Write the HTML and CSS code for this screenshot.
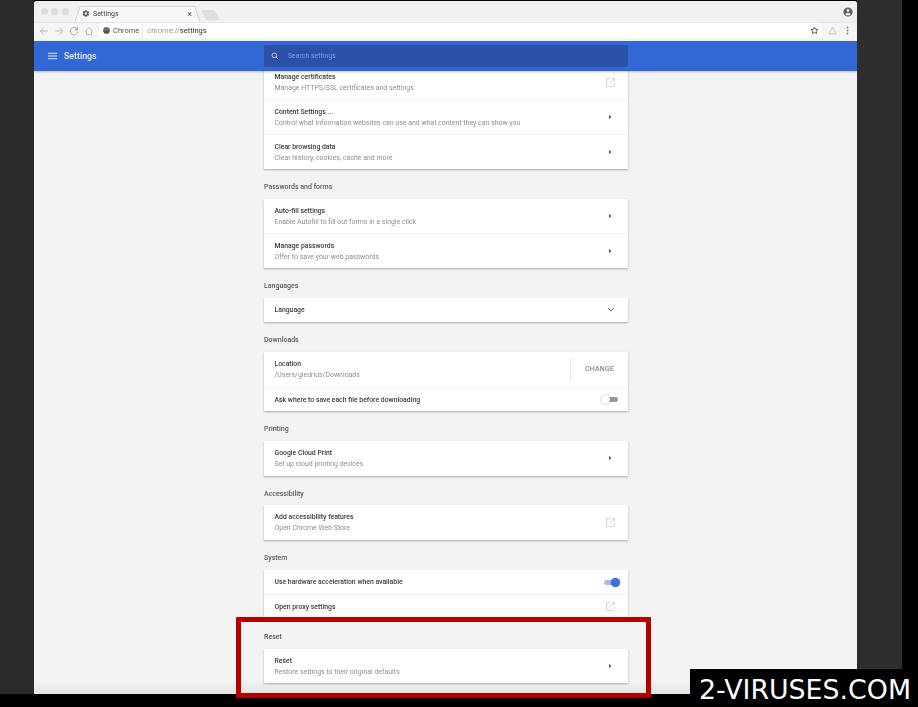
FILE: index.html
```html
<!DOCTYPE html>
<html lang="en">
<head>
<meta charset="utf-8">
<title>Settings</title>
<link rel="stylesheet" href="styles.css">
</head>
<body>
<svg class="defs" width="0" height="0" aria-hidden="true">
  <defs>
    <symbol id="ext" viewBox="0 0 10 10"><path d="M9.300 5.500v3.800H.7V.7h3.800" fill="none" stroke="currentColor" stroke-width=".9"/><path d="M3.800 6.200L9 1M6.300.7h3v3" fill="none" stroke="currentColor" stroke-width=".9"/></symbol>
    <symbol id="arrow" viewBox="0 0 4 6"><path d="M1 .8L3.400 3 1 5.200z" fill="currentColor"/></symbol>
  </defs>
</svg>
<div class="screen">
  <div class="gutter-left"></div>
  <div class="window">
    <div class="tabstrip">
      <div class="lights"><i></i><i></i><i></i></div>
      <div class="tab">
        <svg class="tab-shape" viewBox="0 0 125 16" preserveAspectRatio="none"><path d="M0 16L5 .5h115l5 15.500" fill="#f7f7f7" stroke="#d2d2d2" stroke-width="1"/></svg>
        <svg class="tab-gear" viewBox="0 0 24 24" width="9" height="9"><path fill="#4a4a4a" d="M19.400 13a7.500 7.500 0 0 0 0-2l2.100-1.600-2-3.500-2.500 1a7.300 7.300 0 0 0-1.700-1L15 3.200h-4l-.4 2.700a7.300 7.300 0 0 0-1.700 1l-2.500-1-2 3.500L6.500 11a7.500 7.500 0 0 0 0 2l-2.100 1.600 2 3.500 2.500-1a7.300 7.300 0 0 0 1.700 1l.4 2.700h4l.4-2.700a7.300 7.300 0 0 0 1.700-1l2.500 1 2-3.500zM13 15.500a3.500 3.500 0 1 1 0-7 3.500 3.500 0 0 1 0 7z"/></svg>
        <span class="tab-title">Settings</span>
        <span class="tab-close">×</span>
      </div>
      <svg class="newtab" viewBox="0 0 18 10" width="18" height="10"><path d="M0 0h12l5 9.500H4z" fill="#dfdfdf" stroke="#d2d2d2" stroke-width=".5"/></svg>
      <svg class="profile" viewBox="0 0 24 24" width="10" height="10"><path fill="#5f5f5f" fill-rule="evenodd" d="M12 1a11 11 0 1 0 0 22 11 11 0 0 0 0-22zm0 4a3.500 3.500 0 1 1 0 7 3.500 3.500 0 0 1 0-7zm0 15.500a8.500 8.500 0 0 1-6.500-3c.8-1.800 4.200-3 6.500-3s5.700 1.200 6.500 3a8.500 8.500 0 0 1-6.500 3z"/></svg>
    </div>
    <div class="toolbar">
      <div class="navs">
        <svg viewBox="0 0 12 12" width="10" height="10"><path d="M10.500 6h-9M5.500 2L1.500 6l4 4" fill="none" stroke="#b5b5b5" stroke-width="1.100"/></svg>
        <svg viewBox="0 0 12 12" width="10" height="10"><path d="M1.500 6h9M6.500 2l4 4-4 4" fill="none" stroke="#b5b5b5" stroke-width="1.100"/></svg>
        <svg viewBox="0 0 12 12" width="10" height="10"><path d="M10 4.200A4.500 4.500 0 1 0 10.500 7" fill="none" stroke="#a5a5a5" stroke-width="1.100"/><path d="M10.800 1v4h-4z" fill="#a5a5a5"/></svg>
        <svg viewBox="0 0 12 12" width="10" height="10"><path d="M1.500 6L6 1.800 10.500 6M3 5.500v5h6v-5" fill="none" stroke="#b5b5b5" stroke-width="1"/></svg>
      </div>
      <div class="omnibox">
        <svg class="globe" viewBox="0 0 10 10" width="7" height="7"><circle cx="5" cy="5" r="4.800" fill="#555"/><path d="M2 3h3v2H3zM6 1.500l2 1.500-1 2z" fill="#999"/></svg>
        <span class="chip">Chrome</span>
        <span class="url"><span class="url-dim">chrome://</span>settings</span>
        <svg class="star" viewBox="0 0 24 24" width="9" height="9"><path d="M12 3l2.700 6 6.300.7-4.700 4.300 1.300 6.500L12 17.200 6.400 20.500 7.700 14 3 9.700 9.300 9z" fill="none" stroke="#555" stroke-width="2.600"/></svg>
      </div>
      <div class="tools">
        <svg viewBox="0 0 12 12" width="9" height="9"><path d="M6 1.500L11 10.500H1z" fill="none" stroke="#bbb" stroke-width="1.100"/></svg>
        <svg viewBox="0 0 4 12" width="3" height="9"><circle cx="2" cy="2" r="1.200" fill="#888"/><circle cx="2" cy="6" r="1.200" fill="#888"/><circle cx="2" cy="10" r="1.200" fill="#888"/></svg>
      </div>
    </div>
    <header class="appbar">
      <div class="appbar-left">
        <svg viewBox="0 0 10 8" width="9" height="8"><path d="M0 1h10M0 4h10M0 7h10" stroke="#e4ebfa" stroke-width="1.100"/></svg>
        <span class="appbar-title">Settings</span>
      </div>
      <div class="search">
        <svg viewBox="0 0 12 12" width="8" height="8"><circle cx="5" cy="5" r="3.500" fill="none" stroke="#dfe8fa" stroke-width="1.200"/><path d="M7.500 7.500L11 11" stroke="#dfe8fa" stroke-width="1.300"/></svg>
        <span class="search-text">Search settings</span>
      </div>
    </header>
    <main class="content">
      <div class="column">
        <section class="card">
          <div class="row"><div class="label"><div class="title">Manage certificates</div><div class="sub">Manage HTTPS/SSL certificates and settings</div></div><svg class="ext"><use href="#ext"/></svg></div>
          <div class="row"><div class="label"><div class="title">Content Settings ...</div><div class="sub">Control what information websites can use and what content they can show you</div></div><svg class="arrow"><use href="#arrow"/></svg></div>
          <div class="row"><div class="label"><div class="title">Clear browsing data</div><div class="sub">Clear history, cookies, cache and more</div></div><svg class="arrow"><use href="#arrow"/></svg></div>
        </section>
        <h2 class="heading">Passwords and forms</h2>
        <section class="card">
          <div class="row"><div class="label"><div class="title">Auto-fill settings</div><div class="sub">Enable Autofill to fill out forms in a single click</div></div><svg class="arrow"><use href="#arrow"/></svg></div>
          <div class="row"><div class="label"><div class="title">Manage passwords</div><div class="sub">Offer to save your web passwords</div></div><svg class="arrow"><use href="#arrow"/></svg></div>
        </section>
        <h2 class="heading">Languages</h2>
        <section class="card">
          <div class="row row-single"><div class="label"><div class="title">Language</div></div><svg class="chevron" viewBox="0 0 8 5"><path d="M1 1l3 3 3-3" fill="none" stroke="#666" stroke-width="1"/></svg></div>
        </section>
        <h2 class="heading">Downloads</h2>
        <section class="card">
          <div class="row"><div class="label"><div class="title">Location</div><div class="sub">/Users/giedrius/Downloads</div></div><div class="change">CHANGE</div></div>
          <div class="row row-single"><div class="label"><div class="title">Ask where to save each file before downloading</div></div><div class="toggle"><span class="knob"></span></div></div>
        </section>
        <h2 class="heading">Printing</h2>
        <section class="card">
          <div class="row"><div class="label"><div class="title">Google Cloud Print</div><div class="sub">Set up cloud printing devices</div></div><svg class="arrow"><use href="#arrow"/></svg></div>
        </section>
        <h2 class="heading">Accessibility</h2>
        <section class="card">
          <div class="row"><div class="label"><div class="title">Add accessibility features</div><div class="sub">Open Chrome Web Store</div></div><svg class="ext"><use href="#ext"/></svg></div>
        </section>
        <h2 class="heading">System</h2>
        <section class="card">
          <div class="row row-single"><div class="label"><div class="title">Use hardware acceleration when available</div></div><div class="toggle toggle-on"><span class="knob"></span></div></div>
          <div class="row row-single"><div class="label"><div class="title">Open proxy settings</div></div><svg class="ext"><use href="#ext"/></svg></div>
        </section>
        <h2 class="heading">Reset</h2>
        <section class="card">
          <div class="row"><div class="label"><div class="title">Reset</div><div class="sub">Restore settings to their original defaults</div></div><svg class="arrow"><use href="#arrow"/></svg></div>
        </section>
      </div>
    </main>
  </div>
  <div class="gutter-right"></div>
</div>
<div class="highlight"></div>
<div class="watermark">2-VIRUSES.COM</div>
</body>
</html>
```

FILE: styles.css
```css
* { box-sizing: border-box; }
html, body { margin: 0; height: 100%; background: #000; overflow: hidden; }
body { position: relative; font-family: Roboto, "Liberation Sans", sans-serif; }
.defs { position: absolute; }

.screen { display: flex; height: 694px; width: 902px; }
.gutter-left { width: 34px; background: #2b2b2b; }
.gutter-right { width: 45px; background: #2e2e2e; }
.window { width: 823px; margin-top: 1px; display: flex; flex-direction: column; border-radius: 3px 3px 0 0; overflow: hidden; background: #f3f3f3; filter: blur(.4px); }

.tabstrip { height: 21px; flex: none; background: #f1f1f1; display: flex; align-items: flex-end; position: relative; }
.lights { display: flex; gap: 3.500px; padding: 0 0 0 6.500px; width: 41px; align-self: center; }
.lights i { width: 7px; height: 7px; border-radius: 50%; background: #dcdcdc; flex: none; }
.tab { width: 125px; height: 16px; position: relative; display: flex; align-items: center; padding: 0 5px 0 6px; margin-bottom: .5px; }
.tab-shape { position: absolute; inset: 0; width: 100%; height: 100%; }
.tab-gear, .tab-title, .tab-close { position: relative; }
.tab-title { font-size: 7px; color: #444; margin-left: 3px; flex: 1; }
.tab-close { font-size: 9px; color: #555; margin-right: 3px; }
.newtab { margin: 0 0 2.500px 2px; }
.profile { margin: 0 4px 0 auto; align-self: center; }

.toolbar { height: 19px; flex: none; background: #f5f5f5; border-top: 1px solid #e4e4e4; display: flex; align-items: center; }
.navs { display: flex; gap: 5px; width: 65px; padding-left: 5px; flex: none; margin-bottom: 3px; }
.omnibox { width: 723px; height: 15px; margin-bottom: 3px; background: #fff; border-radius: 2px; display: flex; align-items: center; padding: 0 3px 0 4px; flex: none; }
.chip { font-size: 7.500px; color: #555; margin-left: 3px; padding-right: 3px; border-right: 1px solid #e6e6e6; line-height: 13px; }
.url { font-size: 7.500px; color: #333; margin-left: 4px; flex: 1; }
.url-dim { color: #999; }
.tools { display: flex; align-items: center; gap: 9px; padding-left: 6px; margin-bottom: 3px; }

.appbar { height: 30px; flex: none; background: #3367d6; display: flex; align-items: center; position: relative; z-index: 2; box-shadow: 0 1px 2px rgba(0, 0, 0, .25); }
.appbar-left { display: flex; align-items: center; gap: 7px; width: 230px; padding-left: 14px; flex: none; margin-top: -1px; }
.appbar-title { font-size: 8.800px; color: #e8eefb; font-weight: 500; }
.search { width: 364px; height: 22px; background: #2a50a8; border-radius: 2px; display: flex; align-items: center; gap: 9px; padding-left: 7px; flex: none; }
.search-text { font-size: 6.500px; color: #85a6e6; letter-spacing: .2px; }

.content { flex: 1; overflow: hidden; background: #f3f3f3; padding-left: 230px; position: relative; }
.content::after { content: ""; position: absolute; left: 0; right: 0; bottom: 0; height: 14px; background: linear-gradient(rgba(0, 0, 0, 0), rgba(0, 0, 0, .06)); }
.column { width: 364px; margin-top: -6px; }
.card { background: #fff; box-shadow: 0 1px 2px rgba(0, 0, 0, .3); }
.heading { height: 29.900px; margin: 0; padding-top: 13px; font-size: 7px; line-height: 10px; font-weight: 500; color: #5a5a5a; }
.row { height: 34.600px; display: flex; align-items: center; padding-left: 10.500px; border-top: 1px solid #f0f0f0; }
.row:first-child { border-top: 0; }
.row-single { height: 24.400px; }
.label { flex: 1; padding-top: 1.500px; }
.title { font-size: 6.850px; line-height: 11px; color: #3a3a3a; font-weight: 500; }
.sub { font-size: 6.950px; line-height: 11px; color: #8e8e8e; }
.ext { width: 9px; height: 9px; color: #c9c9c9; margin-right: 13px; }
.arrow { width: 4px; height: 6px; color: #555; margin-right: 16px; }
.chevron { width: 8px; height: 5px; margin-right: 13px; }
.change { height: 23px; width: 58px; border-left: 1px solid #e8e8e8; font-size: 7px; color: #888; font-weight: 500; display: flex; align-items: center; justify-content: center; letter-spacing: .2px; }
.toggle { width: 13px; height: 5px; border-radius: 3px; background: #999; margin-right: 10px; position: relative; }
.knob { position: absolute; left: -4px; top: -2px; width: 9px; height: 9px; border-radius: 50%; background: #fff; box-shadow: 0 0 2px rgba(0, 0, 0, .4); }
.toggle-on { width: 14px; margin-right: 10px; background: #a6bcec; }
.toggle-on .knob { left: 6.500px; background: #3f6fdb; }

.highlight { position: absolute; left: 236px; top: 617px; width: 415px; height: 81px; border: 5px solid #b30000; border-radius: 1px; }
.watermark { position: absolute; left: 690px; top: 669px; width: 228px; height: 38px; background: #000; color: #fff; font-family: "DejaVu Sans", sans-serif; font-size: 26.800px; line-height: 42px; padding-left: 9px; white-space: nowrap; }
```
